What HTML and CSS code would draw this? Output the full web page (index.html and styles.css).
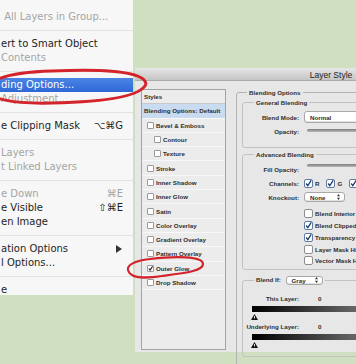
FILE: index.html
```html
<!DOCTYPE html>
<html lang="en">
<head>
    <meta charset="UTF-8">
    <title>Blending Options - Layer Style</title>
    <link rel="stylesheet" href="styles.css">
</head>
<body>
    <div class="scene">
        <div class="menu">
            <div class="item off">&nbsp;All Layers in Group...</div>
            <div class="sep"></div>
            <div class="item">ert to Smart Object</div>
            <div class="item off">Contents</div>
            <div class="sep"></div>
            <div class="item active">ding Options...</div>
            <div class="item off">Adjustment...</div>
            <div class="sep"></div>
            <div class="item">e Clipping Mask<span class="key">⌥⌘G</span></div>
            <div class="sep"></div>
            <div class="item off">Layers</div>
            <div class="item off">t Linked Layers</div>
            <div class="sep"></div>
            <div class="item off">e Down<span class="key">⌘E</span></div>
            <div class="item">e Visible<span class="key">⇧⌘E</span></div>
            <div class="item">en Image</div>
            <div class="sep"></div>
            <div class="item">ation Options<span class="arrow"></span></div>
            <div class="item">l Options...</div>
            <div class="sep"></div>
            <div class="item">e</div>
        </div>

        <div class="dialog">
            <div class="titlebar">Layer Style</div>
            <div class="dialog-body">
                <div class="styles">
                    <div class="row head">Styles</div>
                    <div class="row current">Blending Options: Default</div>
                    <div class="row"><span class="box"></span>Bevel &amp; Emboss</div>
                    <div class="row sub"><span class="box"></span>Contour</div>
                    <div class="row sub"><span class="box"></span>Texture</div>
                    <div class="row"><span class="box"></span>Stroke</div>
                    <div class="row"><span class="box"></span>Inner Shadow</div>
                    <div class="row"><span class="box"></span>Inner Glow</div>
                    <div class="row"><span class="box"></span>Satin</div>
                    <div class="row"><span class="box"></span>Color Overlay</div>
                    <div class="row"><span class="box"></span>Gradient Overlay</div>
                    <div class="row"><span class="box"></span>Pattern Overlay</div>
                    <div class="row"><span class="box on"></span>Outer Glow</div>
                    <div class="row"><span class="box"></span>Drop Shadow</div>
                </div>

                <div class="blend">
                    <fieldset class="outer">
                        <legend>Blending Options</legend>

                        <fieldset class="group">
                            <legend>General Blending</legend>
                            <div class="field">
                                <span class="label">Blend Mode:</span>
                                <span class="select wide">Normal<span class="updown"></span></span>
                            </div>
                            <div class="field">
                                <span class="label">Opacity:</span>
                                <span class="track"></span>
                            </div>
                        </fieldset>

                        <fieldset class="group advanced">
                            <legend>Advanced Blending</legend>
                            <div class="field">
                                <span class="label">Fill Opacity:</span>
                                <span class="track fill"></span>
                            </div>
                            <div class="field">
                                <span class="label">Channels:</span>
                                <span class="check on"></span><span class="chan">R</span>
                                <span class="check on"></span><span class="chan">G</span>
                                <span class="check on"></span><span class="chan">B</span>
                            </div>
                            <div class="field">
                                <span class="label">Knockout:</span>
                                <span class="select small">None<span class="updown"></span></span>
                            </div>
                            <div class="options">
                                <div class="opt"><span class="check"></span>Blend Interior Effects as Group</div>
                                <div class="opt"><span class="check on"></span>Blend Clipped Layers as Group</div>
                                <div class="opt"><span class="check on"></span>Transparency Shapes Layer</div>
                                <div class="opt"><span class="check"></span>Layer Mask Hides Effects</div>
                                <div class="opt"><span class="check"></span>Vector Mask Hides Effects</div>
                            </div>
                        </fieldset>

                        <fieldset class="group blendif">
                            <legend>Blend If: <span class="select tiny">Gray<span class="updown"></span></span></legend>
                            <div class="range">
                                <span class="label">This Layer:</span><span class="value">0</span>
                            </div>
                            <div class="ramp"></div>
                            <div class="knob"><svg width="7" height="6" viewBox="0 0 7 6"><polygon points="3.5,0 7,6 0,6" fill="#111"/><rect x="3" y="2" width="1" height="2.5" fill="#ddd"/></svg></div>
                            <div class="range">
                                <span class="label">Underlying Layer:</span><span class="value">0</span>
                            </div>
                            <div class="ramp"></div>
                            <div class="knob"><svg width="7" height="6" viewBox="0 0 7 6"><polygon points="3.5,0 7,6 0,6" fill="#111"/><rect x="3" y="2" width="1" height="2.5" fill="#ddd"/></svg></div>
                        </fieldset>
                    </fieldset>
                </div>
            </div>
        </div>

        <!-- hand drawn marks over the screenshot -->
        <svg class="marks" width="356" height="364" viewBox="0 0 356 364">
            <path d="M146,84 C145,70 95,69 52,71 C20,72 -6,76 -12,87 C-14,99 12,104 52,103 C100,102 141,97 146,84" fill="none" stroke="#d3232b" stroke-width="3"/>
            <path d="M203,264 C203,256 175,256 150,259 C134,261 127,265 128,270 C130,278 142,279 162,276 C185,273 203,271 203,264" fill="none" stroke="#d3232b" stroke-width="2.2"/>
        </svg>
    </div>
</body>
</html>
```

FILE: styles.css
```css
body {
    margin: 0;
    background-color: #d0dfbf;
    font-family: "DejaVu Sans", sans-serif;
}
.scene {
    position: relative;
    width: 356px;
    height: 364px;
    overflow: hidden;
    display: flex;
    align-items: flex-start;
}

/* context menu */
.menu {
    flex: none;
    width: 133px;
    height: 295px;
    box-sizing: border-box;
    padding-top: 10px;
    background-color: #f7f7f7;
    overflow: hidden;
    font-size: 10px;
    color: #1e1e1e;
}
.item {
    height: 14px;
    line-height: 14px;
    display: flex;
    justify-content: space-between;
    align-items: center;
    padding: 0 10px 0 1px;
    white-space: nowrap;
}
.item.off {
    color: #a5a5a5;
}
.item.active {
    background: linear-gradient(#4a85e4, #2f68d6);
    color: #ffffff;
}
.sep {
    height: 13px;
    display: flex;
    align-items: center;
}
.sep::after {
    content: "";
    flex: 1;
    border-top: 1px solid #e2e2e2;
}
.arrow {
    width: 0;
    height: 0;
    border-left: 6px solid #333;
    border-top: 4px solid transparent;
    border-bottom: 4px solid transparent;
    margin-right: 1px;
}

/* layer style dialog */
.dialog {
    flex: none;
    width: 392px;
    height: 284px;
    margin: 68px 0 0 2px;
    background-color: #e7e7e7;
    font-family: "Liberation Sans", sans-serif;
    font-size: 6.2px;
    font-weight: bold;
    color: #2e2e2e;
}
.titlebar {
    height: 13px;
    line-height: 14px;
    box-sizing: border-box;
    text-align: center;
    font-weight: normal;
    font-size: 8.5px;
    color: #222;
    background: linear-gradient(#e6e6e6, #c5c5c5);
    border-bottom: 1px solid #acacac;
}
.dialog-body {
    display: flex;
    align-items: flex-start;
    gap: 10px;
    padding: 8px 0 0 6px;
}

.styles {
    flex: none;
    width: 85px;
    height: 261px;
    box-sizing: border-box;
    border: 1px solid #a3a3a3;
    background-color: #ececec;
    overflow: hidden;
}
.row {
    height: 14.3px;
    box-sizing: border-box;
    border-bottom: 1px solid #f8f8f8;
    display: flex;
    align-items: center;
    gap: 2px;
    padding-left: 5px;
    white-space: nowrap;
}
.row.head {
    padding-left: 2px;
    border-bottom: 1px solid #c8c8c8;
}
.row.current {
    padding-left: 2px;
    background-color: #c8dbf1;
}
.row.sub {
    padding-left: 12px;
}
.box {
    width: 5px;
    height: 5px;
    border: 1px solid #9a9a9a;
    border-radius: 1px;
    background-color: #fff;
}
.box.on {
    background: #fff url("data:image/svg+xml,%3Csvg xmlns='http://www.w3.org/2000/svg' viewBox='0 0 6 6'%3E%3Cpath d='M1 3 L2.5 5 L5.5 0.5' fill='none' stroke='%23222' stroke-width='1.3'/%3E%3C/svg%3E") center / 100% no-repeat;
}

.blend {
    flex: 1;
    min-width: 0;
    margin-right: 8px;
}
fieldset {
    margin: 0;
    min-width: 0;
    border: 1px solid #b3b3b3;
    border-radius: 3px;
}
legend {
    padding: 0 2px;
    line-height: 7px;
}
.outer {
    height: 300px;
    padding: 3px 8px 0 5px;
}
.outer > legend {
    margin-left: 5px;
}
.group {
    padding: 5px 6px 8px 3px;
    border-color: #c2c2c2;
}
.group > legend {
    margin-left: 8px;
}
.field {
    height: 12px;
    display: flex;
    align-items: center;
    margin-bottom: 2px;
}
.label {
    flex: none;
    width: 53px;
    margin-right: 5px;
    display: flex;
    justify-content: flex-end;
    white-space: nowrap;
}
.select {
    display: inline-flex;
    align-items: center;
    justify-content: space-between;
    box-sizing: border-box;
    background-color: #fff;
    border: 1px solid #a8a8a8;
    border-radius: 3px;
    box-shadow: inset 0 -1px 0 #e2e2e2;
    font-weight: bold;
}
.select.wide {
    width: 120px;
    height: 12px;
    padding: 0 4px 0 5px;
}
.select.small {
    width: 41px;
    height: 10px;
    padding: 0 4px 0 5px;
}
.select.tiny {
    width: 37px;
    height: 9px;
    padding: 0 4px 0 4px;
    margin-left: 4px;
    vertical-align: middle;
}
.updown {
    width: 3px;
    height: 6px;
    background: url("data:image/svg+xml,%3Csvg xmlns='http://www.w3.org/2000/svg' viewBox='0 0 4 8'%3E%3Cpath d='M0 3 L2 0 L4 3 Z M0 5 L2 8 L4 5 Z' fill='%23333'/%3E%3C/svg%3E") center / 100% 100% no-repeat;
}
.track {
    align-self: flex-start;
    margin: 4px 0 0 3px;
    width: 110px;
    height: 3px;
    border-radius: 2px;
    background: linear-gradient(#7d7d7d, #b9b9b9);
}
.track.fill {
    margin-top: 1px;
}
.advanced {
    margin-top: 3px;
    padding-bottom: 2px;
}
.chan {
    margin: 0 7px 0 2px;
}
.check {
    flex: none;
    width: 9px;
    height: 9px;
    box-sizing: border-box;
    border: 1px solid #8e8e8e;
    border-radius: 2px;
    background-color: #fff;
}
.check.on {
    border-color: #5d7ba6;
    background: #fff url("data:image/svg+xml,%3Csvg xmlns='http://www.w3.org/2000/svg' viewBox='0 0 9 9'%3E%3Cpath d='M1.5 4.5 L3.6 7.2 L8 0.5' fill='none' stroke='%231b3766' stroke-width='1.6'/%3E%3C/svg%3E") center / 100% no-repeat;
}
.options {
    padding: 3px 0 0 58px;
}
.opt {
    height: 11.75px;
    display: flex;
    align-items: center;
    gap: 2px;
    white-space: nowrap;
}
.blendif {
    margin-top: 6px;
    padding: 9px 0 6px 9px;
}
.blendif > legend {
    margin-left: 2px;
}
.range {
    height: 10px;
    display: flex;
    align-items: center;
}
.range .label {
    width: 47px;
    margin-right: 0;
}
.value {
    margin-left: 19px;
}
.ramp {
    margin-top: 2px;
    height: 6px;
    background: linear-gradient(to right, #000, #fff);
}
.knob {
    height: 6px;
    margin: 2px 0 2px -1px;
    line-height: 0;
}

.marks {
    position: absolute;
    left: 0;
    top: 0;
    pointer-events: none;
}
```
